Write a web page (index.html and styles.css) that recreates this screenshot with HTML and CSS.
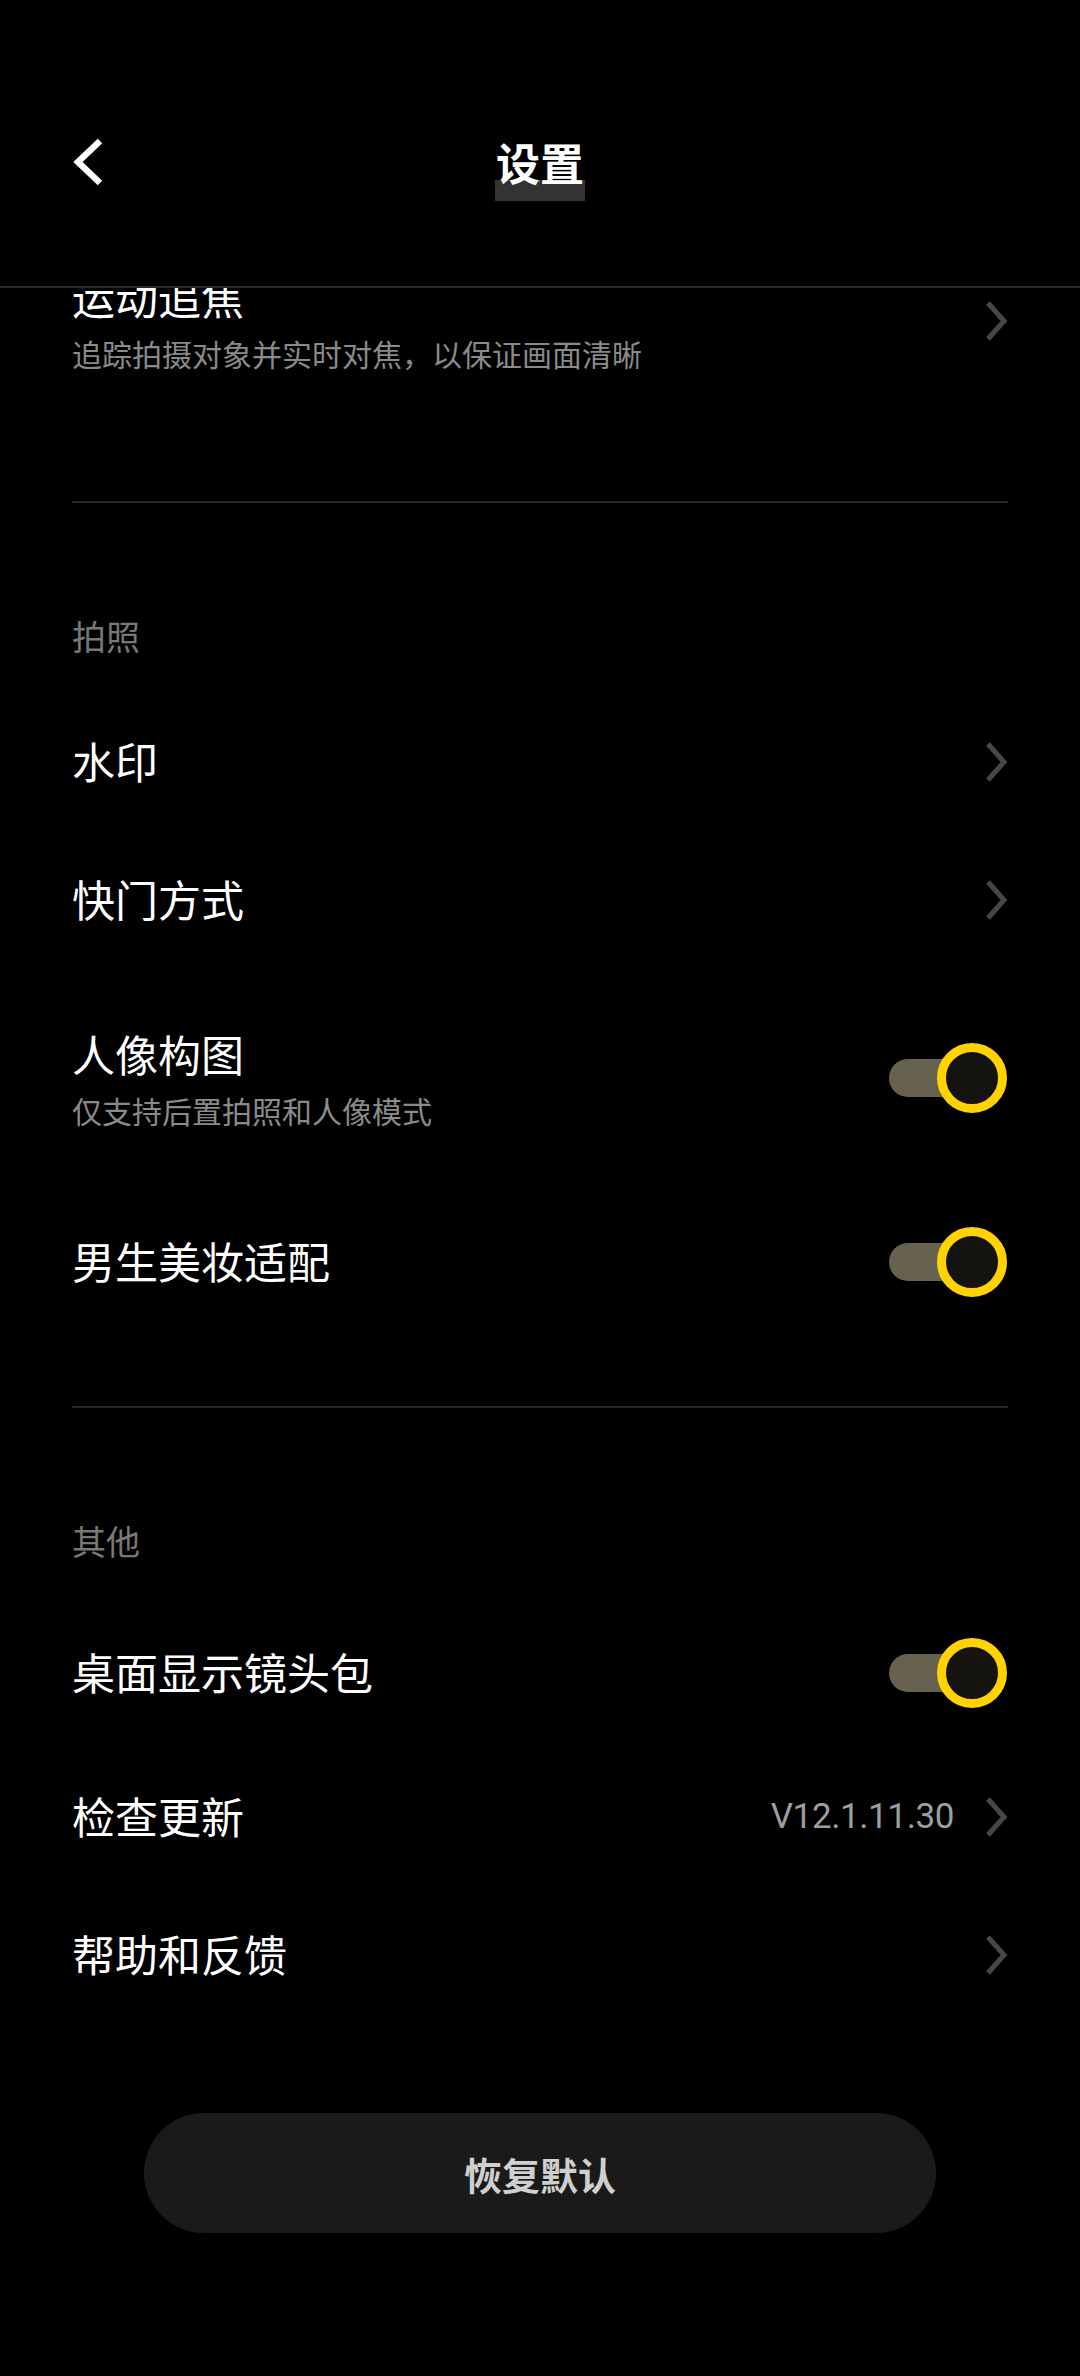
FILE: index.html
```html
<!DOCTYPE html>
<html lang="zh-CN">
<head>
<meta charset="utf-8">
<title>设置</title>
<link rel="stylesheet" href="styles.css">
</head>
<body>
<div class="page">
  <header class="header">
    <div class="bar">
      <div class="back">
        <svg width="36" height="50" viewBox="0 0 36 50"><path d="M28 4 L6 25 L28 46" fill="none" stroke="#fff" stroke-width="6.5" stroke-linejoin="miter"/></svg>
      </div>
      <div class="title">设置</div>
      <div></div>
    </div>
  </header>
  <main class="list">
    <div class="row two first">
      <div class="texts">
        <div class="name">运动追焦</div>
        <div class="sub">追踪拍摄对象并实时对焦，以保证画面清晰</div>
      </div>
      <svg class="chev" width="26" height="42" viewBox="0 0 26 42"><path d="M5 3 L21 21 L5 39" fill="none" stroke="#474747" stroke-width="5"/></svg>
    </div>
    <div class="divider"></div>

    <div class="section">拍照</div>
    <div class="row">
      <div class="name">水印</div>
      <svg class="chev" width="26" height="42" viewBox="0 0 26 42"><path d="M5 3 L21 21 L5 39" fill="none" stroke="#474747" stroke-width="5"/></svg>
    </div>
    <div class="row">
      <div class="name">快门方式</div>
      <svg class="chev" width="26" height="42" viewBox="0 0 26 42"><path d="M5 3 L21 21 L5 39" fill="none" stroke="#474747" stroke-width="5"/></svg>
    </div>
    <div class="row two short">
      <div class="texts">
        <div class="name">人像构图</div>
        <div class="sub">仅支持后置拍照和人像模式</div>
      </div>
      <div class="switch"><span class="track"></span><span class="knob"></span></div>
    </div>
    <div class="row toggle">
      <div class="name">男生美妆适配</div>
      <div class="switch"><span class="track"></span><span class="knob"></span></div>
    </div>
    <div class="divider"></div>

    <div class="section">其他</div>
    <div class="row toggle">
      <div class="name">桌面显示镜头包</div>
      <div class="switch"><span class="track"></span><span class="knob"></span></div>
    </div>
    <div class="row">
      <div class="name">检查更新</div>
      <div class="trail">
        <span class="value">V12.1.11.30</span>
        <svg class="chev" width="26" height="42" viewBox="0 0 26 42"><path d="M5 3 L21 21 L5 39" fill="none" stroke="#474747" stroke-width="5"/></svg>
      </div>
    </div>
    <div class="row">
      <div class="name">帮助和反馈</div>
      <svg class="chev" width="26" height="42" viewBox="0 0 26 42"><path d="M5 3 L21 21 L5 39" fill="none" stroke="#474747" stroke-width="5"/></svg>
    </div>

    <div class="reset">恢复默认</div>
  </main>
</div>
</body>
</html>
```
FILE: styles.css
```css
* { box-sizing: border-box; }
html, body {
  margin: 0;
  padding: 0;
  background: #000;
}
body {
  width: 1080px;
  height: 2376px;
  overflow: hidden;
  font-family: "Noto Sans CJK SC", "Noto Sans", sans-serif;
  color: #fff;
}
.page {
  width: 1080px;
  height: 2376px;
  display: flex;
  flex-direction: column;
}
.header {
  height: 288px;
  padding: 112px 72px 0;
  border-bottom: 2px solid #2a2a2a;
  position: relative;
  z-index: 2;
  background: #000;
}
.bar {
  height: 100px;
  display: grid;
  grid-template-columns: 1fr auto 1fr;
  align-items: center;
}
.back {
  display: flex;
  align-items: center;
}
.back svg { display: block; }
.title {
  position: relative;
  z-index: 0;
  font-size: 44px;
  font-weight: 700;
  line-height: 100px;
  height: 100px;
  color: #fff;
}
.title::before {
  content: "";
  position: absolute;
  z-index: -1;
  left: -1px;
  right: -1px;
  top: 68px;
  height: 21px;
  background: #333333;
}
.list {
  flex: 1;
  overflow: hidden;
  display: flex;
  flex-direction: column;
}
.row {
  height: 138px;
  flex: none;
  padding: 0 72px;
  display: flex;
  align-items: center;
  justify-content: space-between;
}
.row.two { height: 222px; }
.row.two.short { height: 218px; }
.row.first { margin-top: -78px; }
.row.toggle { height: 150px; }
.name {
  font-size: 43px;
  line-height: 58px;
  color: #fff;
  white-space: nowrap;
}
.row > .name { padding-bottom: 4px; }
.sub {
  font-size: 30px;
  line-height: 44px;
  margin-top: 6px;
  color: #8a8a8a;
  white-space: nowrap;
}
.chev {
  display: block;
  flex: none;
  margin-right: -1px;
}
.trail {
  display: flex;
  align-items: center;
  gap: 29px;
}
.value {
  font-family: Roboto, "Noto Sans", sans-serif;
  font-size: 35px;
  line-height: 44px;
  letter-spacing: -0.4px;
  color: #9e9e9e;
}
.divider {
  flex: none;
  height: 2px;
  margin: 69px 72px 0;
  background: #262626;
}
.section {
  flex: none;
  padding: 109px 72px 33px;
  font-size: 34px;
  line-height: 48px;
  color: #787878;
}
.switch {
  position: relative;
  flex: none;
  width: 118px;
  height: 70px;
  margin-right: 1px;
}
.track {
  position: absolute;
  left: 0;
  top: 16px;
  width: 100px;
  height: 38px;
  border-radius: 19px;
  background: #66624f;
}
.knob {
  position: absolute;
  right: 0;
  top: 0;
  width: 70px;
  height: 70px;
  border-radius: 50%;
  border: 9px solid #ffd200;
  background: #141310;
}
.reset {
  flex: none;
  margin: 89px auto 0;
  width: 792px;
  height: 120px;
  border-radius: 60px;
  background: #1a1a1a;
  color: #cfcfcf;
  font-size: 38px;
  font-weight: 700;
  display: flex;
  align-items: center;
  justify-content: center;
}
```
